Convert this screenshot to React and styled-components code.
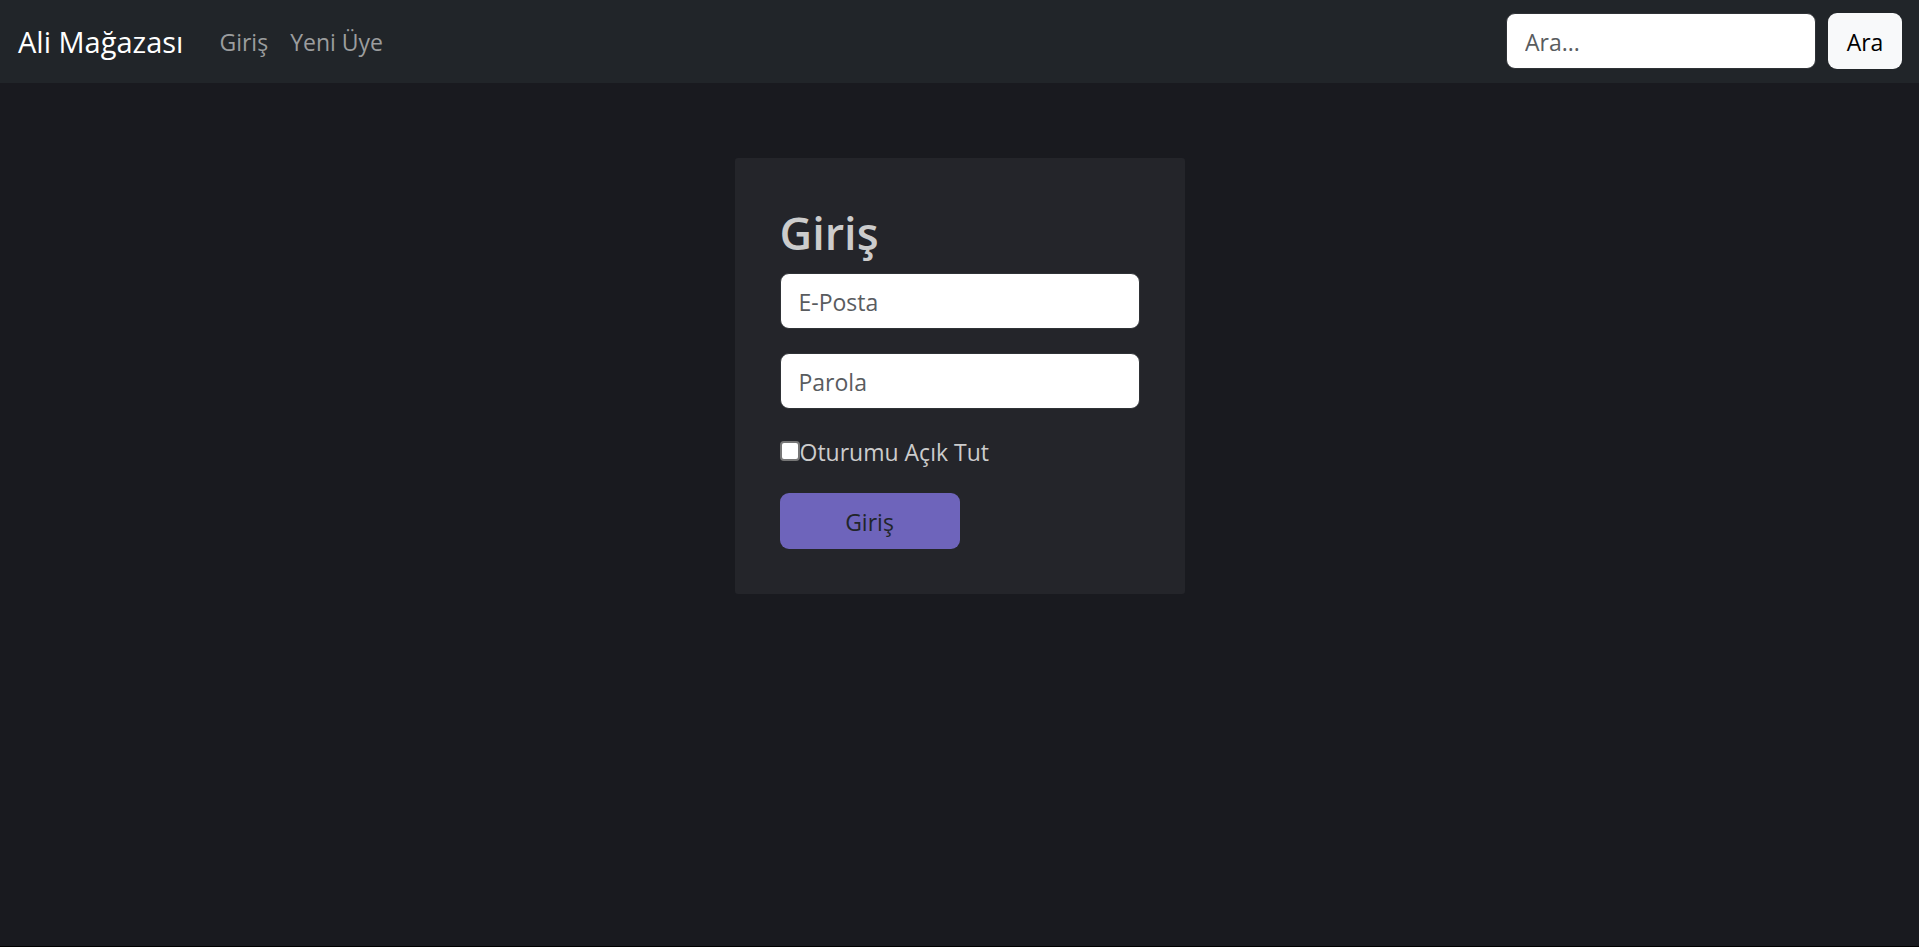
import React from "react";
import styled, { createGlobalStyle } from "styled-components";

const GlobalStyle = createGlobalStyle`
  *, *::before, *::after { box-sizing: border-box; }
  body {
    margin: 0;
    background: #191a1f;
    color: #cccccc;
    font-family: "Open Sans", "Noto Sans", sans-serif;
    font-size: 23px;
    line-height: 36px;
  }
  input, button { font: inherit; }
`;

const Page = styled.div`
  min-height: 100vh;
  display: flex;
  flex-direction: column;
  border-bottom: 1px solid #000;
`;

const Navbar = styled.nav`
  display: flex;
  align-items: center;
  padding: 13px 17px 14px 18px;
  background: #212529;
`;

const Brand = styled.a`
  margin-right: 36px;
  padding-top: 2px;
  color: #fff;
  font-size: 29px;
  text-decoration: none;
`;

const NavList = styled.ul`
  display: flex;
  gap: 22px;
  flex: 1;
  margin: 0;
  padding: 2px 0 0;
  list-style: none;
`;

const NavLink = styled.a`
  color: #9b9d9e;
  text-decoration: none;
`;

const SearchForm = styled.form`
  display: flex;
  align-items: center;
  gap: 12px;
`;

const TextInput = styled.input`
  display: block;
  width: ${(p) => p.$width || "100%"};
  height: 56px;
  padding: 2px 18px 0;
  border: 1px solid #2f3236;
  border-radius: 9px;
  background: #fff;
  color: #212529;
  &::placeholder { color: #595c5f; opacity: 1; }
`;

const Button = styled.button`
  width: ${(p) => p.$width || "auto"};
  height: 56px;
  padding: 2px 18px 0;
  border: 0;
  border-radius: 9px;
  background: ${(p) => (p.$primary ? "#6e64bb" : "#f8f9fa")};
  color: ${(p) => (p.$primary ? "#212529" : "#000")};
  cursor: pointer;
`;

const Main = styled.main`
  display: flex;
  justify-content: center;
  padding: 75px 24px;
`;

const Card = styled.form`
  width: 450px;
  padding: 45px;
  border-radius: 3px;
  background: #24252a;
`;

const Title = styled.h1`
  margin: 0 0 10px;
  font-size: 45px;
  font-weight: 600;
  line-height: 60px;
`;

const Field = styled.div`
  margin-bottom: 24px;
`;

const CheckRow = styled.div`
  display: flex;
  align-items: center;
  margin-bottom: 24px;
`;

const CheckLabel = styled.label`
  height: 36px;
  padding-top: 1px;
`;

const Checkbox = styled.input`
  appearance: none;
  width: 20px;
  height: 20px;
  margin: 0;
  border: 2px solid #767676;
  border-radius: 4px;
  background: #fff;
  &:checked { background: #6e64bb; }
`;

export default function App() {
  return (
    <>
      <GlobalStyle />
      <Page>
        <Navbar>
          <Brand href="#">Ali Mağazası</Brand>
          <NavList>
            <li><NavLink href="#giris">Giriş</NavLink></li>
            <li><NavLink href="#yeni-uye">Yeni Üye</NavLink></li>
          </NavList>
          <SearchForm role="search">
            <TextInput type="search" placeholder="Ara..." aria-label="Ara" $width="310px" />
            <Button type="submit" $width="74px">Ara</Button>
          </SearchForm>
        </Navbar>
        <Main>
          <Card id="giris">
            <Title>Giriş</Title>
            <Field>
              <TextInput type="email" placeholder="E-Posta" aria-label="E-Posta" />
            </Field>
            <Field>
              <TextInput type="password" placeholder="Parola" aria-label="Parola" />
            </Field>
            <CheckRow>
              <Checkbox type="checkbox" id="oturum" />
              <CheckLabel htmlFor="oturum">Oturumu Açık Tut</CheckLabel>
            </CheckRow>
            <Button type="submit" $primary $width="50%">Giriş</Button>
          </Card>
        </Main>
      </Page>
    </>
  );
}
